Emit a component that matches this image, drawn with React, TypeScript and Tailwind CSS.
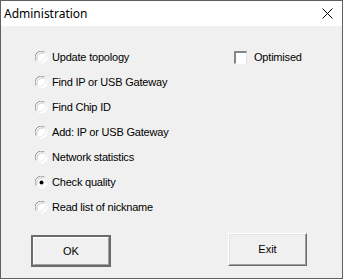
const options = [
  "Update topology",
  "Find IP or USB Gateway",
  "Find Chip ID",
  "Add: IP or USB Gateway",
  "Network statistics",
  "Check quality",
  "Read list of nickname",
];

function Radio({ checked }: { checked?: boolean }) {
  return (
    <svg width="13" height="13" viewBox="0 0 13 13" className="shrink-0">
      <circle cx="6.5" cy="6.5" r="6" fill="#ffffff" />
      <path d="M1.2 9.5 A6 6 0 0 1 9.5 1.2" fill="none" stroke="#8c8c8c" strokeWidth="1" />
      <path d="M2.2 8.6 A5 5 0 0 1 8.6 2.2" fill="none" stroke="#c4c4c4" strokeWidth="1" />
      <path d="M9.5 1.2 A6 6 0 0 1 1.2 9.5" fill="none" stroke="#e8e8e8" strokeWidth="1" />
      {checked && <circle cx="6.5" cy="6.5" r="2" fill="#000000" />}
    </svg>
  );
}

export default function App() {
  const font = { fontFamily: '"Liberation Sans", Arial, sans-serif' };
  return (
    <div
      className="w-[343px] h-[279px] border border-[#5b6167] bg-[#f0f0f0] flex flex-col text-black"
      style={font}
    >
      {/* Title bar */}
      <div className="h-[25px] bg-white flex items-center justify-between pl-[3px] pr-[9px]">
        <span className="text-[12px]" style={{ fontFamily: '"Noto Sans", "Open Sans", sans-serif' }}>
          Administration
        </span>
        <svg width="11" height="11" viewBox="0 0 11 11">
          <path d="M0.5 0.5 L10.5 10.5 M10.5 0.5 L0.5 10.5" stroke="#000" strokeWidth="1" />
        </svg>
      </div>

      {/* Body */}
      <div className="flex pt-[24px] pl-[34px]">
        <div className="w-[199px] flex flex-col gap-[11px]">
          {options.map((label, i) => (
            <label key={i} className="h-[14px] flex items-center gap-[4px] text-[11px] leading-none tracking-[-0.2px]">
              <Radio checked={label === "Check quality"} />
              <span>{label}</span>
            </label>
          ))}
        </div>
        <label className="h-[14px] flex items-center gap-[7px] text-[11px] leading-none tracking-[-0.2px]">
          <span className="w-[13px] h-[13px] bg-white border-t-2 border-l-2 border-[#868686] border-b border-r border-b-white border-r-[#e0e0e0]" />
          <span>Optimised</span>
        </label>
      </div>

      {/* Buttons */}
      <div className="flex items-start justify-between pl-[30px] pr-[35px] mt-[19px]">
        <button className="mt-[2px] w-[80px] h-[32px] border-2 border-[#6a6a6a]">
          <div className="w-full h-full border border-t-white border-l-white border-b-[#a0a0a0] border-r-[#a0a0a0] flex items-center justify-center text-[11px]">
            OK
          </div>
        </button>
        <button className="w-[79px] h-[33px] border border-t-white border-l-white border-b-[#696969] border-r-[#696969]">
          <div className="w-full h-full border border-t-[#e3e3e3] border-l-[#e3e3e3] border-b-[#a0a0a0] border-r-[#a0a0a0] flex items-center justify-center text-[11px]">
            Exit
          </div>
        </button>
      </div>
    </div>
  );
}
